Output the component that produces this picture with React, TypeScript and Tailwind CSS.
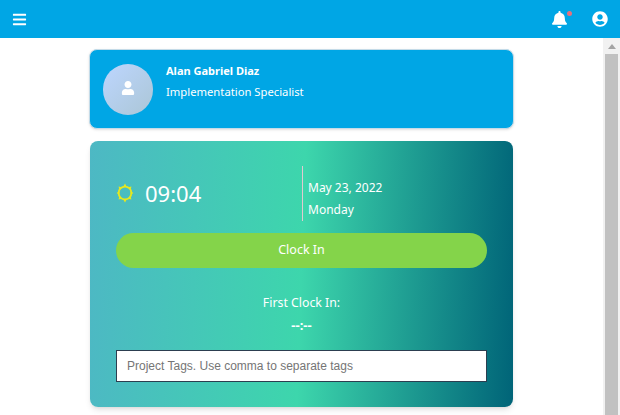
import { FaBars, FaBell, FaUser, FaUserCircle } from "react-icons/fa";

const FONT = "[font-family:'Noto_Sans','Open_Sans',sans-serif]";

const Sun = () => (
  <svg width="18" height="20" viewBox="0 0 18 20" className="shrink-0">
    <circle cx="9" cy="10" r="6.4" fill="none" stroke="#e6e81e" strokeWidth="1.8" />
    <g fill="#e6e81e">
      <path d="M9 0.6l1.7 2.8h-3.4z" />
      <path d="M9 19.4l1.7-2.8h-3.4z" />
      <path d="M0.6 10l2.8-1.7v3.4z" />
      <path d="M17.4 10l-2.8-1.7v3.4z" />
      <path d="M2.6 3.6l3 0.7-2.3 2.3z" />
      <path d="M15.4 3.6l-3 0.7 2.3 2.3z" />
      <path d="M2.6 16.4l3-0.7-2.3-2.3z" />
      <path d="M15.4 16.4l-3-0.7 2.3-2.3z" />
    </g>
  </svg>
);

const Header = () => (
  <header className="flex h-[38px] shrink-0 items-center justify-between bg-[#00a6e5] pl-3 pr-[12px] text-white">
    <FaBars className="text-[15px]" />
    <div className="flex items-center gap-[24px]">
      <div className="relative">
        <FaBell className="text-[17px]" />
        <span className="absolute -right-[4px] top-[0px] h-[5px] w-[5px] rounded-full bg-[#e8707c]" />
      </div>
      <FaUserCircle className="text-[16px]" />
    </div>
  </header>
);

const Profile = () => (
  <section className="flex h-[80px] items-center gap-[13px] rounded-lg border border-[#c4dbe8] bg-[#00a6e5] pl-[13px] shadow-sm">
    <div className="flex h-[51px] w-[50px] items-center justify-center rounded-full bg-gradient-to-br from-[#bdd6ff] to-[#abc6d6]">
      <FaUser className="-mt-[2px] text-[14px] text-white" />
    </div>
    <div className="-mt-[16px] text-white">
      <p className="text-[11px] leading-5 font-bold">Alan Gabriel Diaz</p>
      <p className="mt-[1px] text-[11.25px] leading-5">Implementation Specialist</p>
    </div>
  </section>
);

const ClockCard = () => (
  <section className="mx-px mt-3 h-[266px] rounded-lg bg-[linear-gradient(92deg,#4db8c4_0%,#3dd6ac_50%,#006478_100%)] px-[26px] pt-[25px] text-white shadow-md">
    <div className="flex h-[55px] items-center">
      <div className="-mt-[1px] flex w-[186px] items-center gap-[11px]">
        <Sun />
        <span className="text-[22px] leading-none">09:04</span>
      </div>
      <div className="flex h-full flex-col justify-center gap-[6px] border-l border-[#e0c9d0] pl-[5px] pt-[10px] text-[12px] leading-[16px]">
        <span>May 23, 2022</span>
        <span>Monday</span>
      </div>
    </div>
    <button className="mt-[12px] flex h-[35px] w-full items-center justify-center rounded-full bg-[#84d44a] text-[12.5px] text-white">
      Clock In
    </button>
    <p className="mt-[27px] text-center text-[12.3px] leading-[16px]">First Clock In:</p>
    <p className="mt-[6px] text-center text-[13px] leading-[16px] font-bold">--:--</p>
    <input
      className="mt-[17px] h-[32px] w-full border border-[#2c3e50] bg-white px-[10px] font-['Liberation_Sans',sans-serif] text-[12px] text-black outline-none placeholder:text-[#757575]"
      placeholder="Project Tags. Use comma to separate tags"
    />
  </section>
);

const Scrollbar = () => (
  <div className="flex w-[17px] shrink-0 flex-col bg-[#f1f1f1]">
    <div className="flex h-[17px] items-center justify-center">
      <span className="h-0 w-0 border-x-[4px] border-b-[5px] border-x-transparent border-b-[#a3a3a3]" />
    </div>
    <div className="mx-auto h-full w-[13px] bg-[#c1c1c1]" />
  </div>
);

export default function App() {
  return (
    <div className={`flex h-screen flex-col overflow-hidden bg-white ${FONT}`}>
      <Header />
      <div className="flex min-h-0 flex-1">
        <main className="flex-1 overflow-hidden pt-[11px]">
          <div className="ml-[89px] w-[425px]">
            <Profile />
            <ClockCard />
          </div>
        </main>
        <Scrollbar />
      </div>
    </div>
  );
}
